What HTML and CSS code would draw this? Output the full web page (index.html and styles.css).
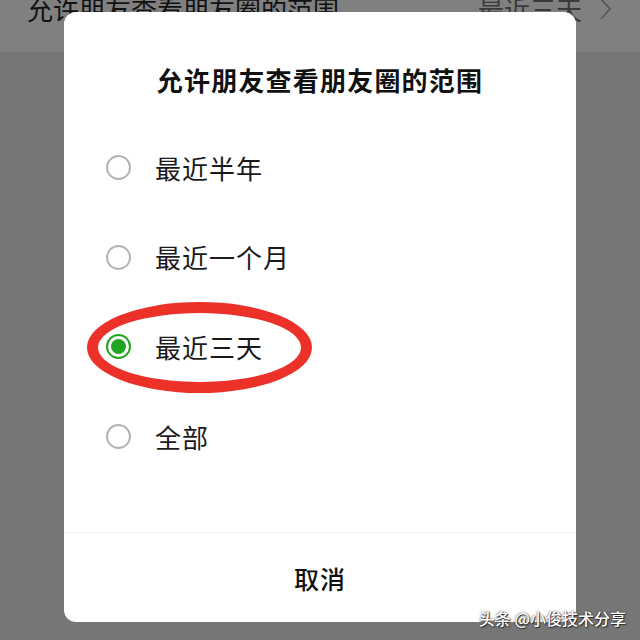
FILE: index.html
```html
<!DOCTYPE html>
<html lang="zh-CN">
<head>
<meta charset="utf-8">
<link rel="stylesheet" href="styles.css">
</head>
<body>
<div class="screen">
  <div class="topbar">
    <div class="topbar-row">
      <span class="topbar-title">允许朋友查看朋友圈的范围</span>
      <span class="topbar-value">最近三天
        <svg class="chevron" width="12" height="22" viewBox="0 0 12 22"><path d="M1 1 L10 11 L1 21" fill="none" stroke="#555" stroke-width="1.6"/></svg>
      </span>
    </div>
  </div>

  <div class="dialog">
    <div class="dialog-title">允许朋友查看朋友圈的范围</div>
    <div class="options">
      <div class="option"><span class="radio"></span><span class="label">最近半年</span></div>
      <div class="option"><span class="radio"></span><span class="label">最近一个月</span></div>
      <div class="option"><span class="radio radio-on"><span class="dot"></span></span><span class="label">最近三天</span></div>
      <div class="option"><span class="radio"></span><span class="label">全部</span></div>
    </div>
    <div class="dialog-footer">取消</div>
  </div>

  <div class="annotation"></div>
  <div class="watermark">头条 @小俊技术分享</div>
</div>
</body>
</html>
```

FILE: styles.css
```css
html, body {
  margin: 0;
  padding: 0;
}
body {
  font-family: "Noto Sans CJK SC", "Noto Sans", sans-serif;
}
.screen {
  position: relative;
  width: 640px;
  height: 640px;
  overflow: hidden;
  background: #767676;
}
.topbar {
  height: 52px;
  background: #808080;
  overflow: hidden;
}
.topbar-row {
  display: flex;
  justify-content: space-between;
  align-items: center;
  padding: 0 28px 0 27px;
  margin-top: -5px;
  height: 28px;
  font-size: 26px;
  line-height: 28px;
}
.topbar-title {
  color: #111;
}
.topbar-value {
  display: flex;
  align-items: center;
  gap: 18px;
  color: #3a3a3a;
}
.chevron {
  display: block;
}
.dialog {
  position: absolute;
  left: 64px;
  top: 12px;
  width: 512px;
  height: 610px;
  background: #fff;
  border-radius: 12px;
  display: flex;
  flex-direction: column;
}
.dialog-title {
  padding-top: 50px;
  height: 36px;
  line-height: 36px;
  text-align: center;
  font-size: 26px;
  font-weight: 700;
  color: #111;
  letter-spacing: 1.2px;
}
.options {
  margin-top: 25px;
  display: flex;
  flex-direction: column;
}
.option {
  height: 89.6px;
  display: flex;
  align-items: center;
  padding-left: 42px;
  gap: 24px;
}
.radio {
  width: 25px;
  height: 25px;
  box-sizing: border-box;
  border: 2px solid #b3b3b3;
  border-radius: 50%;
  display: flex;
  align-items: center;
  justify-content: center;
}
.radio-on {
  border: 2.5px solid #1fa51f;
}
.dot {
  width: 15px;
  height: 15px;
  border-radius: 50%;
  background: #1fa51f;
}
.label {
  font-size: 26px;
  line-height: 36px;
  color: #1a1a1a;
  letter-spacing: 1px;
}
.dialog-footer {
  margin-top: auto;
  height: 89px;
  border-top: 1px solid #efefef;
  display: flex;
  align-items: center;
  justify-content: center;
  font-size: 25px;
  font-weight: 500;
  color: #111;
  letter-spacing: 1px;
}
.annotation {
  position: absolute;
  left: 87px;
  top: 302px;
  width: 225px;
  height: 91px;
  box-sizing: border-box;
  border: 11px solid #ec3129;
  border-radius: 50%;
}
.watermark {
  position: absolute;
  right: 14px;
  bottom: 12px;
  font-size: 16px;
  line-height: 20px;
  font-weight: 500;
  color: #fff;
  text-shadow: 0 0 2px #222, 1px 1px 1px #333;
}
```
